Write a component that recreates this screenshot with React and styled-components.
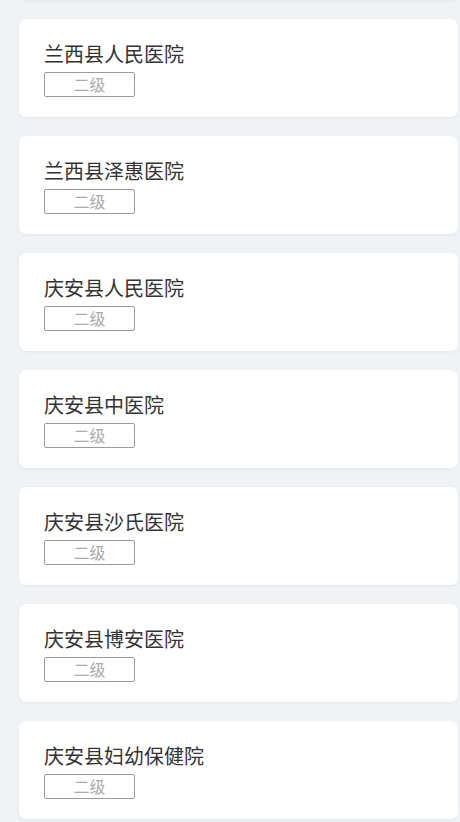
import styled, { createGlobalStyle } from "styled-components"

const GlobalStyle = createGlobalStyle`
	html, body {
		margin: 0;
		padding: 0;
		background: #eff3f6;
		font-family: "Noto Sans CJK SC", "Noto Sans", sans-serif;
		overflow: hidden;
	}
`

const Page = styled.div`
	height: 822px;
	overflow: hidden;
`

// list is scrolled: only the bottom edge of the previous card shows
const List = styled.div`
	display: flex;
	flex-direction: column;
	gap: 19px;
	padding: 0 2px 0 19px;
	margin-top: -98px;
`

const Card = styled.div`
	background: #ffffff;
	border-radius: 7px;
	box-shadow: 0 1px 3px rgba(120, 140, 160, 0.12);
	padding: 22px 25px 20px;
	height: 98px;
	box-sizing: border-box;
	display: flex;
	flex-direction: column;
	align-items: flex-start;
`

const Title = styled.div`
	font-size: 20px;
	line-height: 26px;
	color: #333;
	white-space: nowrap;
`

const Level = styled.div`
	margin-top: 5px;
	width: 91px;
	height: 25px;
	box-sizing: border-box;
	border: 1px solid #9a9a9a;
	border-radius: 2px;
	color: #aaaaaa;
	font-size: 16px;
	line-height: 23px;
	text-align: center;
`

const hospitals = [
	"兰西县人民医院",
	"兰西县泽惠医院",
	"庆安县人民医院",
	"庆安县中医院",
	"庆安县沙氏医院",
	"庆安县博安医院",
	"庆安县妇幼保健院",
]

const App = () => {
	return (
		<Page>
			<GlobalStyle />
			<List>
				<Card />
				{hospitals.map((name, i) => (
					<Card key={i}>
						<Title>{name}</Title>
						<Level>二级</Level>
					</Card>
				))}
			</List>
		</Page>
	)
}

export default App
